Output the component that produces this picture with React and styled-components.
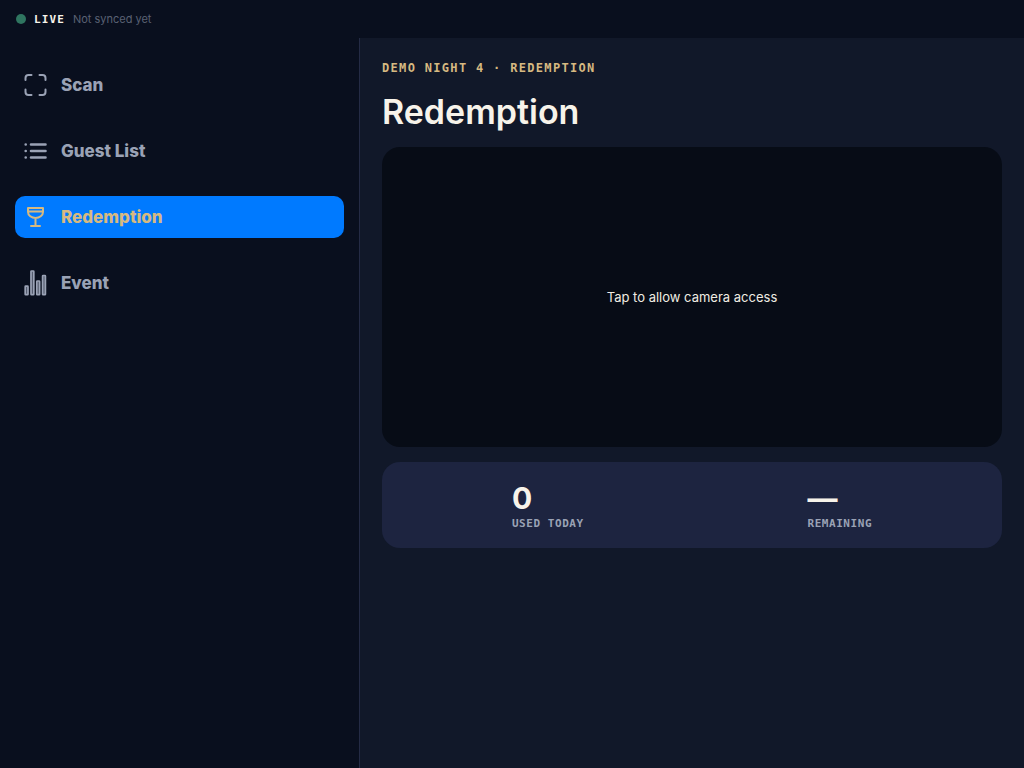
import React from 'react'
import styled, { createGlobalStyle } from 'styled-components'

const sans = `Inter, 'Noto Sans', sans-serif`
const mono = `'DejaVu Sans Mono', 'Liberation Mono', monospace`

const GlobalStyle = createGlobalStyle`
  * {
    box-sizing: border-box;
  }
  body {
    margin: 0;
    background: #090f1e;
    color: #f7f3ea;
    font-family: ${sans};
  }
`

const Page = styled.div`
  display: flex;
  flex-direction: column;
  min-height: 100vh;
`

const StatusBar = styled.header`
  display: flex;
  align-items: center;
  gap: 8px;
  height: 38px;
  padding: 0 16px;
`

const Dot = styled.span`
  width: 10px;
  height: 10px;
  border-radius: 50%;
  background: #2f7560;
`

const Live = styled.span`
  font: bold 11px ${mono};
  letter-spacing: 0.1em;
`

const Synced = styled.span`
  font-size: 11px;
  color: #5a6173;
`

const Body = styled.div`
  display: flex;
  flex: 1;
`

const Sidebar = styled.nav`
  display: flex;
  flex-direction: column;
  flex: 0 0 360px;
  gap: 24px;
  padding: 26px 15px;
  border-right: 1px solid #242b45;
`

const NavLink = styled.a`
  display: flex;
  align-items: center;
  gap: 13px;
  height: 42px;
  padding: 0 9px;
  border-radius: 10px;
  background: ${props => (props.$active ? '#007aff' : 'transparent')};
  color: ${props => (props.$active ? '#d6b981' : '#9aa2b5')};
  font-size: 17px;
  font-weight: 800;
  text-decoration: none;
`

const Icon = styled.svg`
  width: 24px;
  height: 28px;
  fill: none;
  stroke: currentColor;
  stroke-width: 2;
  stroke-linecap: round;
  stroke-linejoin: round;
`

const Main = styled.main`
  flex: 1;
  padding: 22px;
  background: #111829;
`

const Eyebrow = styled.p`
  margin: 0;
  color: #d6b981;
  font: bold 12px/16px ${mono};
  letter-spacing: 0.11em;
`

const Title = styled.h1`
  margin: 14px 0;
  font-size: 34px;
  font-weight: 600;
  line-height: 43px;
`

const Camera = styled.button`
  display: block;
  width: 100%;
  height: 300px;
  padding: 0;
  border: 0;
  border-radius: 18px;
  background: #070c16;
  color: #f0ece3;
  font-family: ${sans};
  font-size: 13px;
`

const Stats = styled.section`
  display: flex;
  justify-content: space-around;
  margin-top: 15px;
  padding: 17px 18px;
  border-radius: 18px;
  background: #1d2440;
`

const Value = styled.div`
  font-size: 30px;
  font-weight: 700;
  line-height: 38px;
`

const Label = styled.div`
  color: #9aa2b5;
  font: bold 11px/14px ${mono};
  letter-spacing: 0.05em;
`

const Stat = ({ value, label }) => (
  <div>
    <Value>{value}</Value>
    <Label>{label}</Label>
  </div>
)

const ScanIcon = () => (
  <Icon viewBox="0 0 24 28">
    <path d="M1.500 9V7Q1.500 4 4.500 4H7.500M15.500 4H18.500Q21.500 4 21.500 7V9M21.500 18.500V21Q21.500 24 18.500 24H15.500M7.500 24H4.500Q1.500 24 1.500 21V18.500" />
  </Icon>
)

const ListIcon = () => (
  <Icon viewBox="0 0 24 28">
    <path d="M7 7.500H21.500M7 14H21.500M7 20.500H21.500M1.700 7.500h.01M1.700 14h.01M1.700 20.500h.01" strokeWidth="2.600" />
  </Icon>
)

const GlassIcon = () => (
  <Icon viewBox="0 0 24 28">
    <path d="M4 5H19V9C19 12.500 15.500 15 11.500 15S4 12.500 4 9ZM4 8.500H19M11.500 15V23M7 23H16" />
  </Icon>
)

const BarsIcon = () => (
  <Icon viewBox="0 0 24 28">
    <g fill="currentColor" fillOpacity="0.5" strokeWidth="1.700">
      <rect x="1.200" y="17.200" width="2.800" height="8.500" rx="0.500" />
      <rect x="7" y="2" width="2.800" height="23.700" rx="0.500" />
      <rect x="12.800" y="12" width="2.800" height="13.700" rx="0.500" />
      <rect x="18.600" y="6.500" width="2.800" height="19.200" rx="0.500" />
    </g>
  </Icon>
)

const App = () => (
  <Page>
    <GlobalStyle />
    <StatusBar>
      <Dot />
      <Live>LIVE</Live>
      <Synced>Not synced yet</Synced>
    </StatusBar>
    <Body>
      <Sidebar>
        <NavLink href="#scan">
          <ScanIcon />
          Scan
        </NavLink>
        <NavLink href="#guests">
          <ListIcon />
          Guest List
        </NavLink>
        <NavLink href="#redemption" $active aria-current="page">
          <GlassIcon />
          Redemption
        </NavLink>
        <NavLink href="#event">
          <BarsIcon />
          Event
        </NavLink>
      </Sidebar>
      <Main>
        <Eyebrow>DEMO NIGHT 4 · REDEMPTION</Eyebrow>
        <Title>Redemption</Title>
        <Camera type="button">Tap to allow camera access</Camera>
        <Stats>
          <Stat value="0" label="USED TODAY" />
          <Stat value="—" label="REMAINING" />
        </Stats>
      </Main>
    </Body>
  </Page>
)

export default App
